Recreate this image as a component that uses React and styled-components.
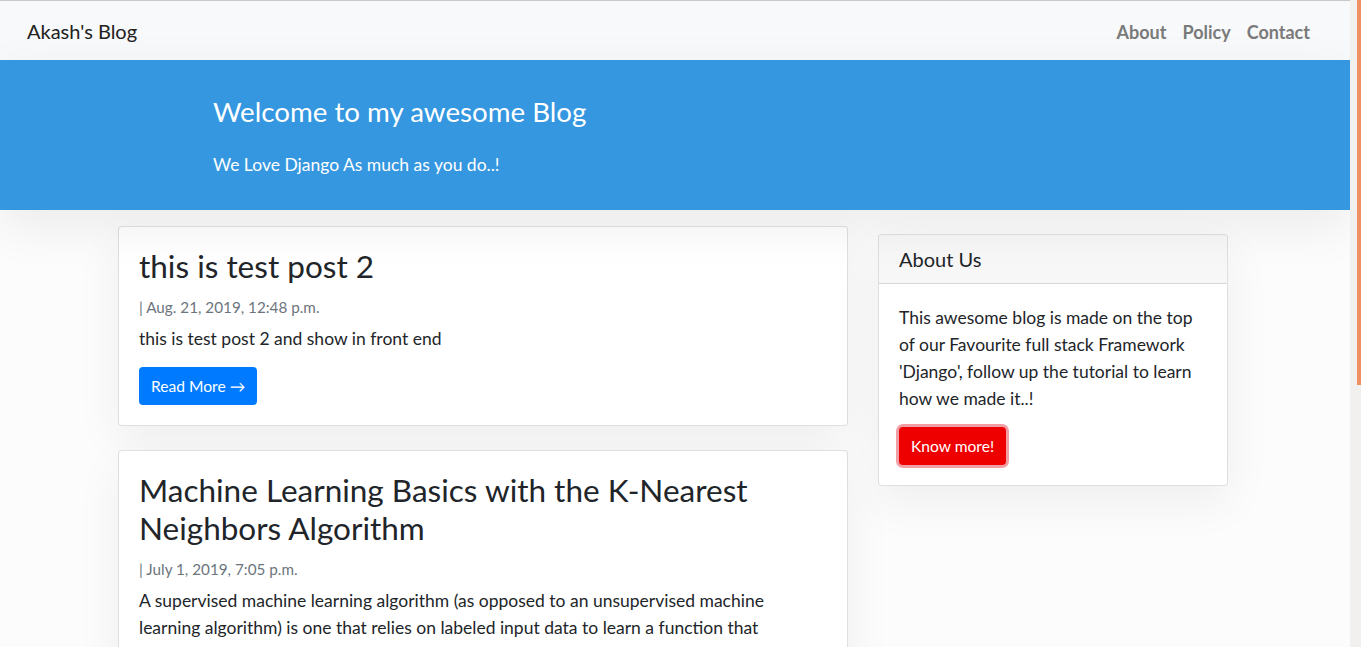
import React from 'react';
import styled, { createGlobalStyle } from 'styled-components';

const GlobalStyle = createGlobalStyle`
  html {
    background: #fcfcfc;
  }
  body {
    margin: 0 11px 0 0;
    background: #fcfcfc;
    font-family: Lato, "Open Sans", sans-serif;
    color: #212529;
  }
  #root {
    min-height: 1090px;
  }
`;

const ScrollTrack = styled.div`
  position: fixed;
  top: 0;
  right: 0;
  width: 11px;
  height: 100vh;
  background: #f1f0ee;
  z-index: 10;
`;

const ScrollThumb = styled.div`
  margin-left: 7px;
  width: 4px;
  height: 385px;
  background: #ef9064;
`;

const Navbar = styled.nav`
  display: flex;
  align-items: center;
  justify-content: space-between;
  height: 59px;
  padding: 0 32px 0 27px;
  background: #f8f9fa;
  border-top: 1px solid #c9c8c6;
`;

const Brand = styled.a`
  font-size: 20px;
  color: #212121;
  text-decoration: none;
  margin-top: 1px;
`;

const NavLinks = styled.ul`
  display: flex;
  list-style: none;
  margin: 2px 0 0;
  padding: 0;
`;

const NavLink = styled.a`
  display: block;
  padding: 0 8px;
  font-size: 18px;
  font-weight: 700;
  color: #7a7a7a;
  text-decoration: none;
`;

const Hero = styled.header`
  height: 150px;
  background: #3497e0;
  color: #fff;
  box-shadow: 0 16px 48px rgba(0, 0, 0, 0.07);
  position: relative;
`;

const HeroInner = styled.div`
  width: 1110px;
  margin: 0 auto;
  padding: 35px 4px 0 93px;
  box-sizing: border-box;
`;

const HeroTitle = styled.h1`
  margin: 0 0 23px;
  font-size: 27.7px;
  font-weight: 400;
  line-height: 1.2;
`;

const HeroLead = styled.p`
  margin: 0;
  font-size: 17.5px;
  line-height: 27px;
`;

const Container = styled.main`
  width: 1114px;
  margin: 0 auto;
  padding: 16px 4px 0 0;
  box-sizing: border-box;
  display: grid;
  grid-template-columns: 730px 350px;
  column-gap: 30px;
  align-items: start;
`;

const Posts = styled.div`
  display: flex;
  flex-direction: column;
  gap: 24px;
`;

const Card = styled.article`
  background: #fff;
  border: 1px solid rgba(0, 0, 0, 0.125);
  border-radius: 4px;
  box-shadow: 0 16px 48px rgba(0, 0, 0, 0.06);
  margin-top: ${p => p.offset || 0}px;
`;

const CardBody = styled.div`
  padding: 20px;
`;

const PostTitle = styled.h2`
  margin: 0 0 10px;
  font-size: 31.5px;
  font-weight: 400;
  line-height: 38px;
`;

const PostDate = styled.p`
  margin: 0 0 6px;
  font-size: 15.25px;
  line-height: 24px;
  color: #6c757d;
`;

const Text = styled.p`
  margin: 0 0 15px;
  font-size: 17.5px;
  line-height: 27px;
`;

const Button = styled.a`
  display: inline-block;
  padding: 0 12px;
  height: 38px;
  line-height: 38px;
  font-size: 15.6px;
  color: #fff;
  text-decoration: none;
  border-radius: 4px;
  background: ${p => (p.danger ? '#ee0000' : '#007bff')};
  box-shadow: ${p => (p.focused ? '0 0 0 3px rgba(230, 80, 90, 0.55)' : 'none')};
`;

const CardHeader = styled.div`
  padding: 12px 20px;
  font-size: 20px;
  line-height: 24px;
  background: #f7f7f7;
  border-bottom: 1px solid rgba(0, 0, 0, 0.125);
  border-radius: 4px 4px 0 0;
`;

const posts = [
  {
    title: 'this is test post 2',
    date: 'Aug. 21, 2019, 12:48 p.m.',
    text: 'this is test post 2 and show in front end',
  },
  {
    title: 'Machine Learning Basics with the K-Nearest Neighbors Algorithm',
    date: 'July 1, 2019, 7:05 p.m.',
    text: 'A supervised machine learning algorithm (as opposed to an unsupervised machine learning algorithm) is one that relies on labeled input data to learn a function that produces an appropriate output when given new unlabeled data.',
  },
];

export default function App() {
  return (
    <>
      <GlobalStyle />
      <Navbar>
        <Brand href="#">Akash's Blog</Brand>
        <NavLinks>
          <li><NavLink href="#">About</NavLink></li>
          <li><NavLink href="#">Policy</NavLink></li>
          <li><NavLink href="#">Contact</NavLink></li>
        </NavLinks>
      </Navbar>
      <Hero>
        <HeroInner>
          <HeroTitle>Welcome to my awesome Blog</HeroTitle>
          <HeroLead>We Love Django As much as you do..!</HeroLead>
        </HeroInner>
      </Hero>
      <Container>
        <Posts>
          {posts.map(post => (
            <Card key={post.title}>
              <CardBody>
                <PostTitle>{post.title}</PostTitle>
                <PostDate>| {post.date}</PostDate>
                <Text>{post.text}</Text>
                <Button href="#">Read More &rarr;</Button>
              </CardBody>
            </Card>
          ))}
        </Posts>
        <Card offset={8}>
          <CardHeader>About Us</CardHeader>
          <CardBody>
            <Text>
              This awesome blog is made on the top of our Favourite full stack Framework 'Django', follow up the tutorial to learn how we made it..!
            </Text>
            <Button href="#" danger focused>Know more!</Button>
          </CardBody>
        </Card>
      </Container>
      <ScrollTrack>
        <ScrollThumb />
      </ScrollTrack>
    </>
  );
}
